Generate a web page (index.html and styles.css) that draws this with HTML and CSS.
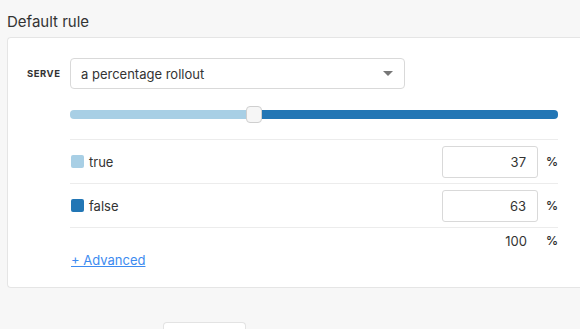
FILE: index.html
```html
<!DOCTYPE html>
<html lang="en">
<head>
  <meta charset="UTF-8">
  <title>Default rule</title>
  <link rel="stylesheet" href="styles.css">
</head>
<body>
  <!-- Section title -->
  <div class="section-title">Default rule</div>

  <!-- Rule card -->
  <div class="card">
    <div class="serve-row">
      <div class="serve-label">SERVE</div>
      <div class="select">
        <span>a percentage rollout</span>
        <span class="caret"></span>
      </div>
    </div>

    <div class="rollout">
      <!-- Slider -->
      <div class="slider">
        <div class="track-true" style="width: 37%"></div>
        <div class="thumb"></div>
        <div class="track-false"></div>
      </div>

      <!-- Variations -->
      <div class="variation">
        <div class="name"><span class="swatch light"></span>true</div>
        <div class="pct-input">37</div>
        <div class="pct-sign">%</div>
      </div>
      <div class="variation">
        <div class="name"><span class="swatch dark"></span>false</div>
        <div class="pct-input">63</div>
        <div class="pct-sign">%</div>
      </div>
      <div class="total">
        <div class="total-value">100</div>
        <div class="pct-sign">%</div>
      </div>

      <a class="advanced" href="#">+ Advanced</a>
    </div>
  </div>

  <div class="footer">
    <div class="footer-box"></div>
  </div>
</body>
</html>
```

FILE: styles.css
```css
body {
  font-family: Inter, "Noto Sans", sans-serif;
  background: #f7f7f7;
  margin: 0;
  color: #333;
  overflow: hidden;
  width: 580px;
  height: 329px;
}

.section-title {
  font-size: 15px;
  padding: 12px 0 0 7px;
  height: 25px;
  color: #333;
}

.card {
  margin-left: 7px;
  width: 573px;
  height: 251px;
  background: #fff;
  border: 1px solid #e5e5e5;
  border-right: none;
  border-radius: 4px 0 0 4px;
  box-sizing: border-box;
  padding: 20px 0 0 19px;
}

.serve-row {
  display: flex;
  align-items: center;
}

.serve-label {
  width: 43px;
  font-size: 9.5px;
  font-weight: 700;
  letter-spacing: 0.5px;
  color: #333;
}

.select {
  width: 335px;
  height: 31px;
  box-sizing: border-box;
  border: 1px solid #d9d9d9;
  border-radius: 4px;
  display: flex;
  align-items: center;
  justify-content: space-between;
  padding: 0 10px 0 10px;
  font-size: 13px;
}

.caret {
  width: 0;
  height: 0;
  border-left: 5px solid transparent;
  border-right: 5px solid transparent;
  border-top: 5px solid #777;
  margin-right: 1px;
}

.rollout {
  margin-left: 43px;
  width: 488px;
  font-size: 13px;
}

.slider {
  display: flex;
  align-items: center;
  height: 17px;
  margin-top: 17px;
  padding-bottom: 16px;
  border-bottom: 1px solid #ececec;
}

.track-true {
  height: 9px;
  background: #a8cfe5;
  border-radius: 4px 0 0 4px;
  flex-shrink: 0;
  margin-right: -5px;
}

.thumb {
  width: 16px;
  height: 17px;
  box-sizing: border-box;
  border: 1px solid #cfcfcf;
  border-radius: 4px;
  background: #f6f6f6;
  flex-shrink: 0;
  position: relative;
  z-index: 1;
}

.track-false {
  flex: 1;
  height: 9px;
  background: #2276b5;
  border-radius: 0 4px 4px 0;
}

.variation {
  display: flex;
  align-items: center;
  height: 43px;
  border-bottom: 1px solid #ececec;
}

.name {
  flex: 1;
  display: flex;
  align-items: center;
}

.swatch {
  width: 13px;
  height: 13px;
  border-radius: 2px;
  margin: 0 5px 0 1px;
}

.swatch.light {
  background: #a8cfe5;
}

.swatch.dark {
  background: #2276b5;
}

.pct-input {
  width: 96px;
  height: 32px;
  box-sizing: border-box;
  border: 1px solid #d9d9d9;
  border-radius: 3px;
  text-align: right;
  padding-right: 11px;
  line-height: 30px;
}

.pct-sign {
  width: 20px;
  text-align: right;
  font-size: 12px;
  font-weight: 600;
}

.total {
  display: flex;
  justify-content: flex-end;
  align-items: center;
  height: 25px;
}

.total-value {
  width: 96px;
  text-align: right;
  padding-right: 11px;
  box-sizing: border-box;
}

.advanced {
  display: block;
  width: fit-content;
  line-height: 14px;
  margin-left: 1px;
  color: #3d8bf0;
}

.footer {
  padding: 34px 0 0 163px;
}

.footer-box {
  width: 81px;
  height: 6px;
  background: #fff;
  border: 1px solid #e3e3e3;
  border-bottom: none;
  border-radius: 4px 4px 0 0;
}
```
